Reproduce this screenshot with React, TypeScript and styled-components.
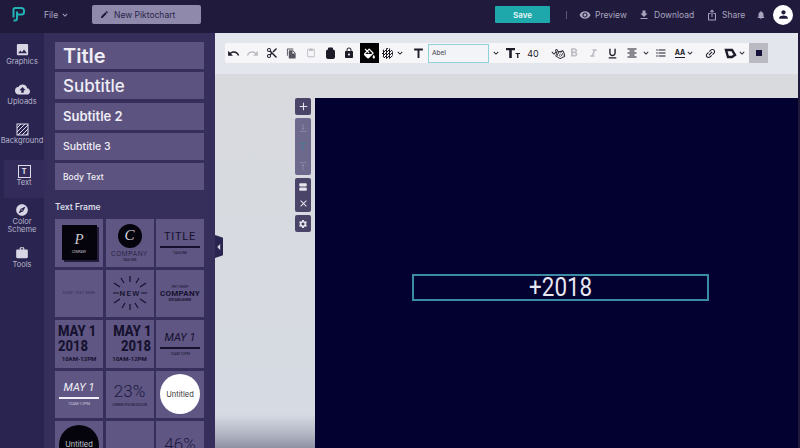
import React from "react";
import styled, { createGlobalStyle } from "styled-components";
import {
  MdUndo,
  MdRedo,
  MdContentCut,
  MdFileCopy,
  MdContentPaste,
  MdLock,
  MdTitle,
  MdFormatBold,
  MdFormatItalic,
  MdFormatUnderlined,
  MdFormatAlignCenter,
  MdFormatListBulleted,
  MdLink,
  MdKeyboardArrowDown,
  MdEdit,
  MdVisibility,
  MdFileDownload,
  MdIosShare,
  MdNotifications,
  MdPerson,
  MdAdd,
  MdClose,
  MdSettings,
  MdCloudUpload,
  MdImage,
  MdExplore,
  MdWork,
  MdArrowLeft,
  MdVerticalAlignBottom,
  MdVerticalAlignTop,
  MdViewAgenda,
} from "react-icons/md";
import { FaFillDrip, FaRegHandPointer } from "react-icons/fa";

const GlobalStyle = createGlobalStyle`
  html, body {
    margin: 0;
    padding: 0;
    background: #1f1a3c;
    font-family: "Inter", "Open Sans", "Liberation Sans", sans-serif;
  }
  svg {
    flex: none;
  }
`;

/* page shell */
const Page = styled.div`
  width: 800px;
  height: 448px;
  overflow: hidden;
  display: flex;
  flex-direction: column;
  background: #1f1a3c;
`;

const TopBar = styled.header`
  height: 33px;
  flex: none;
  display: flex;
  align-items: center;
  padding: 0 7px 4px 12px;
  box-sizing: border-box;
  background: #201b3d;
  color: #b9b5cd;
  font-size: 9px;
`;

const FileMenu = styled.div`
  margin-left: 19px;
  width: 48px;
  display: flex;
  align-items: center;
  gap: 2px;
  font-size: 8.5px;
  color: #aeaac4;
`;

const TitleBox = styled.div`
  width: 109px;
  height: 19px;
  display: flex;
  align-items: center;
  gap: 5px;
  padding-left: 8px;
  box-sizing: border-box;
  background: #8f89ac;
  border-radius: 2px;
  color: #2a2548;
  font-size: 8.5px;
`;

const SaveButton = styled.div`
  margin-left: auto;
  width: 55px;
  height: 17px;
  display: flex;
  align-items: center;
  justify-content: center;
  background: #1fa8ab;
  border-radius: 1px;
  color: #e6f6f6;
  font-size: 8px;
  font-weight: 600;
`;

const Divider = styled.span`
  width: 1px;
  height: 8px;
  margin: 0 12px 0 16px;
  background: #5b5679;
`;

const TopAction = styled.div<{ $w: number }>`
  width: ${(p) => p.$w}px;
  display: flex;
  align-items: center;
  gap: 4px;
  font-size: 8.5px;
  color: #a9a5bf;
`;

const Avatar = styled.div`
  width: 20px;
  height: 20px;
  margin-left: 7px;
  border-radius: 50%;
  background: #fff;
  display: flex;
  align-items: center;
  justify-content: center;
  color: #201b3d;
`;

const Body = styled.div`
  flex: 1;
  min-height: 0;
  display: flex;
`;

/* left rail */
const Rail = styled.nav`
  width: 44px;
  flex: none;
  padding-top: 4px;
  box-sizing: border-box;
  background: #2a2450;
`;

const RailItem = styled.div<{ $active?: boolean; $h: number }>`
  height: ${(p) => p.$h}px;
  margin-left: ${(p) => (p.$active ? 4 : 0)}px;
  display: flex;
  flex-direction: column;
  align-items: center;
  gap: 1px;
  padding-top: 5px;
  box-sizing: border-box;
  background: ${(p) => (p.$active ? "#332c5a" : "transparent")};
  color: #d8d6e4;
  font-size: 7.5px;
  line-height: 8px;
  text-align: center;
  white-space: nowrap;
`;

const RailLabel = styled.span`
  color: #b9b6cc;
`;

const FramedIcon = styled.div`
  width: 11px;
  height: 11px;
  border: 1.5px solid #dedcea;
  display: flex;
  align-items: center;
  justify-content: center;
  font-size: 7px;
  font-weight: 800;
  line-height: 1;
`;

/* text panel */
const Panel = styled.aside`
  width: 171px;
  flex: none;
  position: relative;
  padding: 9px 11px 0 11px;
  box-sizing: border-box;
  background: #362f5c;
`;

const StyleList = styled.div`
  display: flex;
  flex-direction: column;
  gap: 3.3px;
`;

const StyleCard = styled.div<{ $size: number; $weight: number }>`
  height: 27px;
  display: flex;
  align-items: center;
  padding-left: 8px;
  background: #5c5380;
  color: #efedf5;
  font-size: ${(p) => p.$size}px;
  font-weight: ${(p) => p.$weight};
`;

const SectionLabel = styled.div`
  margin: 12px 0 6px;
  font-size: 8.5px;
  line-height: 11px;
  font-weight: 600;
  color: #dbd9e6;
`;

const FrameGrid = styled.div`
  display: grid;
  grid-template-columns: repeat(3, 48px);
  grid-auto-rows: 47.5px;
  gap: 3px 2.5px;
`;

const Frame = styled.div`
  overflow: hidden;
  display: flex;
  flex-direction: column;
  align-items: center;
  justify-content: center;
  background: #5f5683;
  color: #15112e;
  font-family: "Roboto", "Liberation Sans", sans-serif;
  line-height: 1;
`;

const BlackLogo = styled.div`
  width: 35px;
  height: 35px;
  background: #05040c;
  box-shadow: 2px 2px 0 #221d3c;
  display: flex;
  flex-direction: column;
  align-items: center;
  justify-content: center;
  gap: 4px;
  color: #c8c6d2;
  font-size: 3px;
`;

const ScriptLetter = styled.span`
  font-family: "Liberation Serif", serif;
  font-style: italic;
  font-size: 15px;
`;

const Badge = styled.div`
  width: 24px;
  height: 24px;
  border-radius: 50%;
  margin-bottom: 2px;
  background: #05040c;
  color: #d8d6e0;
  display: flex;
  align-items: center;
  justify-content: center;
`;

const Line = styled.div<{ $size: number; $weight?: number; $color?: string; $spacing?: number; $italic?: boolean; $gap?: number }>`
  margin-top: ${(p) => p.$gap ?? 0}px;
  font-size: ${(p) => p.$size}px;
  line-height: 1.15;
  font-weight: ${(p) => p.$weight ?? 400};
  color: ${(p) => p.$color ?? "inherit"};
  letter-spacing: ${(p) => p.$spacing ?? 0}px;
  font-style: ${(p) => (p.$italic ? "italic" : "normal")};
  white-space: nowrap;
`;

const Rule = styled.div<{ $color?: string }>`
  width: 40px;
  height: 2px;
  margin: 3px 0;
  background: ${(p) => p.$color ?? "#15112e"};
`;

const Circle = styled.div<{ $dark?: boolean }>`
  width: 40px;
  height: 40px;
  flex: none;
  border-radius: 50%;
  background: ${(p) => (p.$dark ? "#05040c" : "#fff")};
  color: ${(p) => (p.$dark ? "#c9c7d3" : "#333")};
  display: flex;
  align-items: center;
  justify-content: center;
  font-family: "Inter", sans-serif;
  font-size: 7.5px;
`;

const BigDate = styled.div<{ $right?: boolean }>`
  width: 42px;
  margin-bottom: 2px;
  text-align: ${(p) => (p.$right ? "right" : "left")};
  font-size: 14.5px;
  font-weight: 800;
  line-height: 15px;
  white-space: nowrap;
  transform: scaleX(0.9);
  transform-origin: ${(p) => (p.$right ? "right" : "left")} center;
`;

const Collapse = styled.div`
  position: absolute;
  left: 171px;
  top: 202px;
  width: 8px;
  height: 23px;
  background: #2a2450;
  clip-path: polygon(0 0, 100% 12%, 100% 88%, 0 100%);
  color: #d8d6e4;
  display: flex;
  align-items: center;
  justify-content: center;
`;

/* editor */
const Editor = styled.main`
  flex: 1;
  min-width: 0;
  display: flex;
  flex-direction: column;
`;

const ToolBand = styled.div`
  height: 41px;
  flex: none;
  margin-right: 2px;
  padding: 10px 30px 0 10px;
  box-sizing: border-box;
  background: #e4e6ee;
`;

const ToolStrip = styled.div`
  position: relative;
  height: 20px;
  display: flex;
  align-items: center;
  background: #f6f6f9;
  border-radius: 2px;
  color: #1d1b28;
`;

const Tool = styled.div<{ $w: number; $faded?: boolean; $dark?: boolean; $grey?: boolean }>`
  width: ${(p) => p.$w}px;
  height: 20px;
  flex: none;
  display: flex;
  align-items: center;
  justify-content: center;
  font-size: 9px;
  color: ${(p) => (p.$dark ? "#fff" : p.$faded ? "#bcbcc4" : "#1d1b28")};
  background: ${(p) => (p.$dark ? "#000" : p.$grey ? "#b9bac2" : "transparent")};
`;

const Swatch = styled.span`
  width: 6px;
  height: 6px;
  background: #14123a;
`;

const Checker = styled.span`
  width: 11px;
  height: 11px;
  background: repeating-conic-gradient(#1d1b28 0 25%, #f6f6f9 0 50%) 0 0 / 3px 3px;
  border-radius: 50%;
`;

const FontInput = styled.div`
  width: 61px;
  height: 19px;
  flex: none;
  box-sizing: border-box;
  display: flex;
  align-items: center;
  padding-left: 3px;
  border: 1px solid #8ed2d8;
  background: #f3f4f7;
  font-family: "Roboto", sans-serif;
  font-size: 7px;
  color: #44434f;
`;

const AaMark = styled.span`
  font-size: 7px;
  font-weight: 700;
  border-bottom: 1px solid #1d1b28;
  line-height: 8px;
`;

const HandCursor = styled.div`
  position: absolute;
  left: 329px;
  top: 5px;
  color: #33323d;
  transform: rotate(-25deg);
  display: flex;
`;

const Workspace = styled.div`
  flex: 1;
  min-height: 0;
  display: flex;
  gap: 4px;
  padding: 24px 0 0 80px;
  border-right: 2px solid #1f1a3c;
  background: linear-gradient(180deg, #d8dade 0%, #d6dae2 91%, #b4b8c5 96%, #8d91a3 100%);
`;

const SideControls = styled.div`
  width: 16px;
  flex: none;
  display: flex;
  flex-direction: column;
  gap: 3px;
`;

const ControlGroup = styled.div<{ $faded?: boolean }>`
  display: flex;
  flex-direction: column;
  align-items: center;
  border-radius: 2px;
  background: ${(p) => (p.$faded ? "#6d698c" : "#4a4468")};
  color: ${(p) => (p.$faded ? "#8f8cab" : "#e6e5ee")};
`;

const ControlSlot = styled.div<{ $h: number }>`
  height: ${(p) => p.$h}px;
  width: 16px;
  display: flex;
  align-items: center;
  justify-content: center;
`;

const Canvas = styled.section`
  flex: 1;
  padding: 176px 89px 0 97px;
  background: #02012f;
`;

const TextFrameBox = styled.div`
  height: 27px;
  box-sizing: border-box;
  border: 2px solid #3a8ba3;
  display: flex;
  align-items: center;
  justify-content: center;
  color: #e8e8f2;
  font-family: "Roboto", sans-serif;
`;

const FrameValue = styled.span`
  display: inline-block;
  font-size: 26px;
  line-height: 23px;
  font-weight: 400;
  transform: scaleX(0.86);
`;

const Logo = () => (
  <svg width="13" height="15" viewBox="0 0 13 15" fill="none" stroke="#22b3b5" strokeWidth="2">
    <path d="M2.500 9.500H1.500V2.500A1.500 1.500 0 0 1 3 1H9.500A2.500 2.500 0 0 1 12 3.500V5A2.500 2.500 0 0 1 9.500 7.500H5" />
    <path d="M5 4.500V11.500A2 2 0 0 1 3 13.500H1.500" />
  </svg>
);

const TextSizeIcon = () => (
  <svg width="14" height="12" viewBox="0 0 14 12" fill="#1d1b28">
    <path d="M0 1h9v2.200H5.800V11H3.200V3.200H0z" />
    <path d="M9.500 6H14v1.100h-1.600V11h-1.300V7.100H9.500z" />
  </svg>
);

const ShapeIcon = () => (
  <svg width="13" height="12" viewBox="0 0 13 12" fill="none" stroke="#1d1b28" strokeWidth="2.400">
    <path d="M2 3h6l3 5-3 2H4z" />
  </svg>
);

const TextureIcon = () => (
  <svg width="13" height="13" viewBox="0 0 13 13" stroke="#dedcea" strokeWidth="1" fill="none">
    <rect x="1" y="1" width="11" height="11" />
    <path d="M1 5l4-4M1 9l8-8M2 12L12 2M6 12l6-6M10 12l2-2" />
  </svg>
);

const ClipIcon = () => (
  <svg width="9" height="12" viewBox="0 0 9 12" fill="#1d1b28">
    <path d="M2 2.500V1.500A1 1 0 0 1 3 .5h3a1 1 0 0 1 1 1v1a2 2 0 0 1 2 2V10a2 2 0 0 1-2 2H2a2 2 0 0 1-2-2V4.500a2 2 0 0 1 2-2z" />
  </svg>
);

const Burst = () => (
  <svg width="40" height="40" viewBox="0 0 40 40" stroke="#15112e" strokeWidth="1.200" fill="none">
    <path d="M20 3v6M11 5l3 5M29 5l-3 5M4 10l6 4M36 10l-6 4M3 20h6M31 20h6M4 30l6-4M36 30l-6-4M12 35l3-5M28 35l-3-5M20 31v6" />
    <text x="20" y="23" textAnchor="middle" fontSize="8" fontWeight="500" letterSpacing="1.200" fill="#15112e" stroke="none">NEW</text>
  </svg>
);

const Caret = () => <MdKeyboardArrowDown size={10} />;

const railItems = [
  { label: "Graphics", icon: <MdImage size={15} />, h: 40 },
  { label: "Uploads", icon: <MdCloudUpload size={15} />, h: 41 },
  { label: "Background", icon: <TextureIcon />, h: 42 },
];

const App = (): JSX.Element => {
  return (
    <Page>
      <GlobalStyle />
      <TopBar>
        <Logo />
        <FileMenu>
          File <MdKeyboardArrowDown size={10} />
        </FileMenu>
        <TitleBox>
          <MdEdit size={9} color="#1f1a3c" />
          New Piktochart
        </TitleBox>
        <SaveButton>Save</SaveButton>
        <Divider />
        <TopAction $w={59}>
          <MdVisibility size={12} /> Preview
        </TopAction>
        <TopAction $w={68}>
          <MdFileDownload size={12} /> Download
        </TopAction>
        <TopAction $w={50}>
          <MdIosShare size={12} /> Share
        </TopAction>
        <MdNotifications size={10} color="#a9a5bf" />
        <Avatar>
          <MdPerson size={13} />
        </Avatar>
      </TopBar>

      <Body>
        <Rail>
          {railItems.map((item) => (
            <RailItem key={item.label} $h={item.h}>
              {item.icon}
              <RailLabel>{item.label}</RailLabel>
            </RailItem>
          ))}
          <RailItem $active $h={38}>
            <FramedIcon>T</FramedIcon>
            <RailLabel>Text</RailLabel>
          </RailItem>
          <RailItem $h={43}>
            <MdExplore size={14} />
            <RailLabel>
              Color
              <br />
              Scheme
            </RailLabel>
          </RailItem>
          <RailItem $h={40}>
            <MdWork size={14} />
            <RailLabel>Tools</RailLabel>
          </RailItem>
        </Rail>

        <Panel>
          <StyleList>
            <StyleCard $size={20} $weight={600}>Title</StyleCard>
            <StyleCard $size={17} $weight={500}>Subtitle</StyleCard>
            <StyleCard $size={13} $weight={600}>Subtitle 2</StyleCard>
            <StyleCard $size={10.5} $weight={500}>Subtitle 3</StyleCard>
            <StyleCard $size={8.5} $weight={500}>Body Text</StyleCard>
          </StyleList>
          <SectionLabel>Text Frame</SectionLabel>
          <FrameGrid>
            <Frame>
              <BlackLogo>
                <ScriptLetter>P</ScriptLetter>
                COMPANY
              </BlackLogo>
            </Frame>
            <Frame>
              <Badge>
                <ScriptLetter>C</ScriptLetter>
              </Badge>
              <Line $size={7} $weight={300} $spacing={0.6}>COMPANY</Line>
              <Line $size={3.5}>TAGLINE</Line>
            </Frame>
            <Frame>
              <Line $size={11} $spacing={0.8}>TITLE</Line>
              <Rule />
              <Line $size={3.5}>TAGLINE</Line>
            </Frame>
            <Frame>
              <Line $size={3} $spacing={0.6} $color="#2e2950">SOME TEXT HERE</Line>
            </Frame>
            <Frame>
              <Burst />
            </Frame>
            <Frame>
              <Line $size={3.5}>PET SHOP</Line>
              <Line $size={8} $weight={700} $spacing={0.3}>COMPANY</Line>
              <Line $size={3.5} $weight={700}>ESTABLISHED</Line>
            </Frame>
            <Frame>
              <BigDate>MAY 1<br />2018</BigDate>
              <Line $size={6} $weight={700}>10AM-12PM</Line>
            </Frame>
            <Frame>
              <BigDate $right>MAY 1<br />2018</BigDate>
              <Line $size={6} $weight={700}>10AM-12PM</Line>
            </Frame>
            <Frame>
              <Line $size={11} $italic>MAY 1</Line>
              <Rule />
              <Line $size={3.5}>10AM-12PM</Line>
            </Frame>
            <Frame>
              <Line $size={11} $italic $color="#f1f0f6">MAY 1</Line>
              <Rule $color="#f1f0f6" />
              <Line $size={4} $color="#c9c6d8">10AM-12PM</Line>
            </Frame>
            <Frame>
              <Line $size={17} $weight={300} $color="#1d1940">23%</Line>
              <Line $size={3.5} $gap={1}>LOREM IPSUM DOLOR</Line>
            </Frame>
            <Frame>
              <Circle>Untitled</Circle>
            </Frame>
            <Frame>
              <Circle $dark>Untitled</Circle>
            </Frame>
            <Frame />
            <Frame>
              <Line $size={17} $weight={300} $color="#1d1940">46%</Line>
            </Frame>
          </FrameGrid>
          <Collapse>
            <MdArrowLeft size={14} />
          </Collapse>
        </Panel>

        <Editor>
          <ToolBand>
            <ToolStrip>
              <Tool $w={17}><MdUndo size={13} /></Tool>
              <Tool $w={20} $faded><MdRedo size={13} /></Tool>
              <Tool $w={19}><MdContentCut size={12} /></Tool>
              <Tool $w={20}><MdFileCopy size={11} color="#55545f" /></Tool>
              <Tool $w={19} $faded><MdContentPaste size={10} /></Tool>
              <Tool $w={20}><ClipIcon /></Tool>
              <Tool $w={18}><MdLock size={12} /></Tool>
              <Tool $w={2} />
              <Tool $w={19} $dark><FaFillDrip size={11} /></Tool>
              <Tool $w={17}><Checker /></Tool>
              <Tool $w={8}><Caret /></Tool>
              <Tool $w={6} />
              <Tool $w={16}><MdTitle size={15} /></Tool>
              <Tool $w={2} />
              <FontInput>Abel</FontInput>
              <Tool $w={14}><Caret /></Tool>
              <Tool $w={20}><TextSizeIcon /></Tool>
              <Tool $w={20}>40</Tool>
              <Tool $w={22}><Caret /></Tool>
              <Tool $w={18} $faded><MdFormatBold size={14} /></Tool>
              <Tool $w={20} $faded><MdFormatItalic size={13} /></Tool>
              <Tool $w={18}><MdFormatUnderlined size={13} /></Tool>
              <Tool $w={22}><MdFormatAlignCenter size={12} /></Tool>
              <Tool $w={6}><Caret /></Tool>
              <Tool $w={24}><MdFormatListBulleted size={12} /></Tool>
              <Tool $w={14}><AaMark>AA</AaMark></Tool>
              <Tool $w={6}><Caret /></Tool>
              <Tool $w={7} />
              <Tool $w={20}><MdLink size={13} style={{ transform: "rotate(-45deg)" }} /></Tool>
              <Tool $w={20}><ShapeIcon /></Tool>
              <Tool $w={4}><Caret /></Tool>
              <Tool $w={5} />
              <Tool $w={19} $grey><Swatch /></Tool>
              <HandCursor>
                <FaRegHandPointer size={11} />
              </HandCursor>
            </ToolStrip>
          </ToolBand>
          <Workspace>
            <SideControls>
              <ControlGroup>
                <ControlSlot $h={17}><MdAdd size={13} /></ControlSlot>
              </ControlGroup>
              <ControlGroup $faded>
                <ControlSlot $h={19}><MdVerticalAlignBottom size={10} /></ControlSlot>
                <ControlSlot $h={19}><MdVerticalAlignTop size={10} color="#3f7f98" /></ControlSlot>
                <ControlSlot $h={19}><MdVerticalAlignTop size={10} /></ControlSlot>
              </ControlGroup>
              <ControlGroup>
                <ControlSlot $h={17}><MdViewAgenda size={10} /></ControlSlot>
                <ControlSlot $h={17}><MdClose size={11} /></ControlSlot>
              </ControlGroup>
              <ControlGroup>
                <ControlSlot $h={17}><MdSettings size={10} /></ControlSlot>
              </ControlGroup>
            </SideControls>
            <Canvas>
              <TextFrameBox>
                <FrameValue>+2018</FrameValue>
              </TextFrameBox>
            </Canvas>
          </Workspace>
        </Editor>
      </Body>
    </Page>
  );
};

export default App;
